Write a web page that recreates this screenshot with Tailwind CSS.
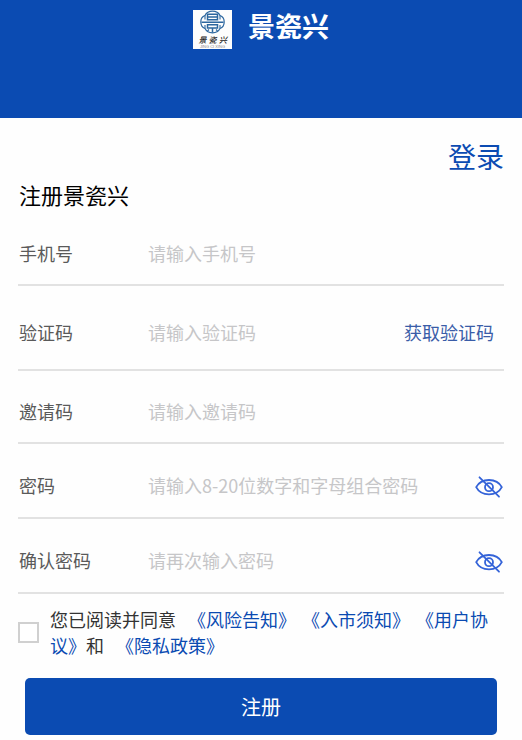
<!DOCTYPE html>
<html lang="zh-CN">
<head>
<meta charset="utf-8">
<meta name="viewport" content="width=device-width, initial-scale=1">
<title>注册景瓷兴</title>
<script src="https://cdn.jsdelivr.net/npm/@tailwindcss/browser@4"></script>
</head>
<body class="bg-[#fefefe] font-['Noto_Sans_CJK_SC',sans-serif] text-lg/7 text-[#5a5a5a] [text-spacing-trim:space-all]">
<svg class="hidden" aria-hidden="true">
  <symbol id="eye-off" viewBox="0 0 28 22">
    <g fill="none" stroke="#3463d8" stroke-width="1.800" stroke-linecap="round">
      <path d="M1.200 11.200C3.800 6.200 8.400 4 14 4s10.200 2.200 12.800 7.200C24.200 16.200 19.600 18.400 14 18.400S3.800 16.200 1.200 11.200Z"/>
      <circle cx="14" cy="11.200" r="4"/>
      <path d="M4.500 1.300 24 20.700"/>
    </g>
  </symbol>
</svg>

<header class="flex items-start justify-center gap-4 bg-[#0b4bb2] pt-2.5 pb-[69px]">
  <svg class="size-[39px] shrink-0" viewBox="0 0 39 39" role="img" aria-label="景瓷兴">
    <rect width="39" height="39" fill="#fdfdfd"/>
    <g fill="none" stroke="#2d679f">
      <path stroke-width="1.200" d="M12 5.500C13.500 2.500 16 1.200 19.500 1.200S25.500 2.500 27 5.500c2.700 1 4.200 3.300 4.200 6.500s-1.500 5.500-4.200 6.500c-1.500 3-4 4.300-7.500 4.300S13.500 21.500 12 18.500C9.300 17.500 7.800 15.200 7.800 12S9.300 6.500 12 5.500Z"/>
      <path stroke-width="1.500" d="M14.500 4.200h10v5.600h-10ZM14.500 7h10M8.500 12.200h22M14.500 14.800h10v3.200h-10ZM19.500 18v4.500"/>
      <path stroke-width="1.100" d="M12 5.500v4M27 5.500v4M12 18.500v-3.500M27 18.500v-3.500M16 19.500l-1.500 1.500M23 19.500l1.500 1.500"/>
    </g>
    <g font-family="Noto Sans CJK SC, sans-serif" font-size="8" font-style="italic" font-weight="500" fill="#222" text-anchor="middle">
      <text x="9.500" y="33">景</text><text x="19.500" y="33">瓷</text><text x="30" y="33">兴</text>
    </g>
    <text x="19.500" y="38" font-family="Liberation Sans, sans-serif" font-size="4" fill="#888" text-anchor="middle">JING CI XING</text>
  </svg>
  <span class="text-[27px]/8 font-bold text-white">景瓷兴</span>
</header>

<main class="px-[18px] pt-[18px] pb-1.5">
  <div class="text-right text-[28px]/10 text-[#0b4bb2]"><a href="#login">登录</a></div>
  <h1 class="pl-px text-[22px]/9 text-black">注册景瓷兴</h1>

  <form>
    <div class="flex items-center border-b-2 border-[#e2e2e2] pt-[27px] pb-[17px]">
      <label for="phone" class="w-[130px] shrink-0 pl-px">手机号</label>
      <input id="phone" type="tel" placeholder="请输入手机号" class="h-7 min-w-0 flex-1 outline-none placeholder:text-[#c6c6c8]">
    </div>
    <div class="flex items-center border-b-2 border-[#e2e2e2] pt-8 pb-[23px]">
      <label for="code" class="w-[130px] shrink-0 pl-px">验证码</label>
      <input id="code" type="text" placeholder="请输入验证码" class="h-7 min-w-0 flex-1 outline-none placeholder:text-[#c6c6c8]">
      <button type="button" class="shrink-0 pr-2.5 text-[#3a5da8]">获取验证码</button>
    </div>
    <div class="flex items-center border-b-2 border-[#e2e2e2] pt-[26px] pb-[17px]">
      <label for="invite" class="w-[130px] shrink-0 pl-px">邀请码</label>
      <input id="invite" type="text" placeholder="请输入邀请码" class="h-7 min-w-0 flex-1 outline-none placeholder:text-[#c6c6c8]">
    </div>
    <div class="flex items-center border-b-2 border-[#e2e2e2] pt-[27px] pb-[18px]">
      <label for="password" class="w-[130px] shrink-0 pl-px">密码</label>
      <input id="password" type="password" placeholder="请输入8-20位数字和字母组合密码" class="h-7 min-w-0 flex-1 outline-none placeholder:text-[#c6c6c8]">
      <button type="button" aria-label="显示密码" class="shrink-0 pt-1 pr-px"><svg class="block h-[22px] w-7"><use href="#eye-off"/></svg></button>
    </div>
    <div class="flex items-center border-b-2 border-[#e2e2e2] pt-[27px] pb-[18px]">
      <label for="confirm" class="w-[130px] shrink-0 pl-px">确认密码</label>
      <input id="confirm" type="password" placeholder="请再次输入密码" class="h-7 min-w-0 flex-1 outline-none placeholder:text-[#c6c6c8]">
      <button type="button" aria-label="显示确认密码" class="shrink-0 pt-1 pr-px"><svg class="block h-[22px] w-7"><use href="#eye-off"/></svg></button>
    </div>

    <div class="flex items-center gap-[11px] pt-3">
      <input id="agree" type="checkbox" class="size-[21px] shrink-0 appearance-none border-2 border-[#d0d0d0] bg-white checked:bg-[#0b4bb2]">
      <p class="min-w-0 flex-1 text-lg/[26px] text-[#333]"><label for="agree" class="mr-1.5">您已阅读并同意</label><a href="#risk" class="ml-1.5 text-[#0b4bb2]">《风险告知》</a><a href="#market" class="ml-1.5 text-[#0b4bb2]">《入市须知》</a><a href="#user" class="ml-1.5 text-[#0b4bb2]">《用户协议》</a><span class="mr-1.5">和</span><a href="#privacy" class="ml-1.5 text-[#0b4bb2]">《隐私政策》</a></p>
    </div>

    <div class="px-[7px] pt-5">
      <button type="submit" class="block h-[57px] w-full rounded-[5px] bg-[#0b4bb2] text-xl text-white">注册</button>
    </div>
  </form>
</main>
</body>
</html>
